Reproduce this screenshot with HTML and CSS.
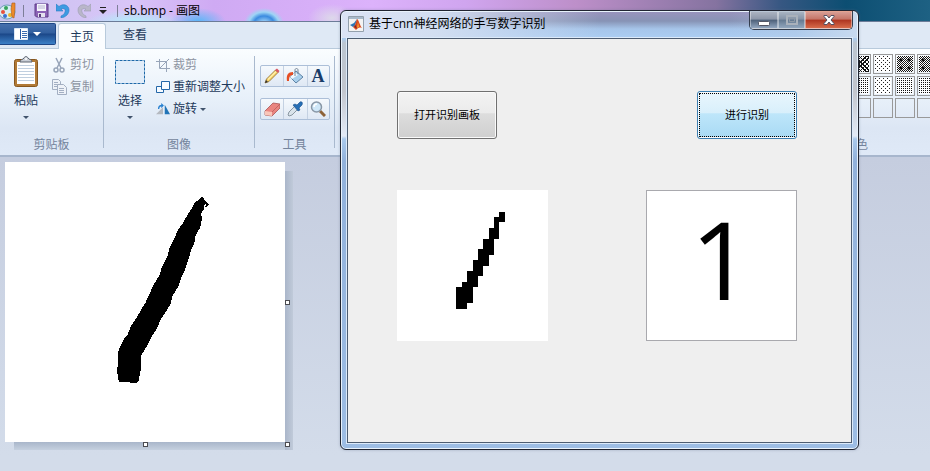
FILE: index.html
```html
<!DOCTYPE html>
<html lang="zh-CN">
<head>
<meta charset="utf-8">
<title>sb.bmp - 画图</title>
<link rel="stylesheet" href="styles.css">
</head>
<body>
<div class="paint">
  <header class="titlebar">
    <svg class="app-icon" width="16" height="18" viewBox="0 0 16 18"><ellipse cx="7" cy="10" rx="8" ry="7" fill="#d8ecf2" stroke="#6d9fb5"/><circle cx="3" cy="10" r="2" fill="#e8503c"/><circle cx="6" cy="6" r="2" fill="#37a35c"/><circle cx="5" cy="14" r="2" fill="#3c6fd0"/><circle cx="10" cy="13" r="2" fill="#f0b526"/><path d="M12 1l3 0 0 6-1 9-2-1-1-8z" fill="#ee8a2a" stroke="#a65a1c" stroke-width=".6"/></svg>
    <span class="bar"></span>
    <button class="quick save" aria-label="保存"><svg width="15" height="15" viewBox="0 0 15 15"><path d="M1 1h13v13H2.500L1 12.500z" fill="#8c63b6" stroke="#5d3c87"/><path d="M3 1h9v7H3z" fill="#f5f5fb"/><path d="M4 3h7M4 5h7" stroke="#b6b4cf"/><path d="M4 10h7v4H4z" fill="#e4e2ef"/><path d="M5 11h2v3H5z" fill="#57407a"/></svg></button>
    <button class="quick undo" aria-label="撤消"><svg width="14" height="15" viewBox="0 0 14 15"><path d="M0 1v7h7L5 6c3-1 5 0 4 3-.500 2-2 3-4 4v2c5-1 8-4 8-8C13 2 7 0 3 3.500z" fill="#3d9be2" stroke="#2b7cc5" stroke-width=".6"/></svg></button>
    <button class="quick redo" aria-label="重做"><svg width="14" height="15" viewBox="0 0 14 15"><path d="M14 1v7H7l2-2C6 5 4 6 5 9c.500 2 2 3 4 4v2c-5-1-8-4-8-8C1 2 7 0 11 3.500z" fill="#b9b6c9" stroke="#9c9db0" stroke-width=".6"/></svg></button>
    <button class="quick more" aria-label="自定义"><svg width="8" height="7" viewBox="0 0 8 7"><path d="M1 0h6v1H1zM0 3h8L4 7z" fill="#222"/></svg></button>
    <span class="bar"></span>
    <span class="doc-name">sb.bmp - 画图</span>
  </header>
  <nav class="tabs">
    <button class="file-tab" aria-label="文件"><svg width="28" height="12" viewBox="0 0 28 12"><path d="M.5.5h13v11H.5z" fill="#fff" stroke="#dce8f7"/><path d="M1 1h5v10H1z" fill="#fff"/><path d="M6.500 1v10" stroke="#2a5ba4"/><path d="M8 3.500h5M8 5.500h5M8 7.500h5M8 9.500h5" stroke="#3a6bb0"/><path d="M19 4h8l-4 4z" fill="#fff"/></svg></button>
    <button class="tab active">主页</button>
    <button class="tab">查看</button>
  </nav>
  <section class="ribbon">
    <div class="group clipboard">
      <div class="group-body">
        <button class="big"><svg width="26" height="32" viewBox="0 0 26 32"><rect x="1.500" y="3.500" width="23" height="27" rx="2" fill="#b17a36" stroke="#87571f"/><path d="M4 6h18v22H4z" fill="#fff"/><path d="M5 9.500h16M5 12.500h16M5 15.500h16M5 18.500h16M5 21.500h16M5 24.500h16" stroke="#c0cfdf"/><path d="M7 6c0-3 3-2 4-4 1-2 3-2 4 0s4 1 4 4z" fill="#c9ced6" stroke="#5d6570"/><circle cx="13" cy="3" r="1" fill="#fff"/></svg><span>粘贴</span><i class="caret"></i></button>
        <div class="stack">
          <button class="small off"><svg width="16" height="16" viewBox="0 0 16 16" fill="none" stroke="#98a5b9" stroke-width="1.500"><path d="M5 1l5 10M11 1L6 11"/><circle cx="5" cy="13" r="2"/><circle cx="11" cy="13" r="2"/></svg>剪切</button>
          <button class="small off"><svg width="16" height="16" viewBox="0 0 16 16" fill="#eef2f8" stroke="#a3afc2"><path d="M1.500.5h6l2 2v8h-8z"/><path d="M3 3.500h4M3 5.500h4M3 7.500h3"/><path d="M6.500 5.500h6l3 3v7h-9z"/><path d="M8 9.500h5M8 11.500h5M8 13.500h5"/></svg>复制</button>
        </div>
      </div>
      <div class="label">剪贴板</div>
    </div>
    <div class="group image">
      <div class="group-body">
        <button class="big"><svg width="32" height="32" viewBox="0 0 32 32"><rect x="1.500" y="4.500" width="29" height="23" fill="#e2edf9" stroke="#1d68a8" stroke-dasharray="3 1"/></svg><span>选择</span><i class="caret"></i></button>
        <div class="stack">
          <button class="small off"><svg width="14" height="14" viewBox="0 0 14 14" fill="none" stroke="#98a5b9"><path d="M3.500 1v9.500H14M0 3.500h10.500V14M4 10L13 1"/></svg>裁剪</button>
          <button class="small"><svg width="14" height="14" viewBox="0 0 14 14" fill="#f7fbff" stroke="#2467a8"><path d="M.5 6.500h7v6h-7z"/><path d="M5.500 1.500h8v8h-8z"/></svg>重新调整大小</button>
          <button class="small"><svg width="16" height="14" viewBox="0 0 16 14"><path d="M8 5v8H0z" fill="#b4b9c0"/><path d="M10 2v11h6z" fill="#2174b7"/><path d="M3 7c0-3 1-4 4-4" fill="none" stroke="#2880d0" stroke-width="1.500"/><path d="M6 0l3 3-3 3z" fill="#2880d0"/></svg>旋转<i class="caret"></i></button>
        </div>
      </div>
      <div class="label">图像</div>
    </div>
    <div class="group tools">
      <div class="group-body">
        <div class="tool-row">
          <button aria-label="铅笔"><svg width="16" height="16" viewBox="0 0 16 16"><path d="M1 15l1.500-4 9-9 2.500 2.500-9 9z" fill="#f4cf63" stroke="#8b6c31" stroke-width=".8"/><path d="M3.500 11l8-8 1 1-8 8z" fill="#fff0ac"/><path d="M11 2l2-1.500 2.500 2.500L14 5z" fill="#d85866"/><path d="M1 15l1-3 2 2z" fill="#333"/></svg></button>
          <button aria-label="填充"><svg width="18" height="16" viewBox="0 0 18 16"><path d="M10 3l7 6-7 6-6-6z" fill="#a9d0ed" stroke="#5e83a5"/><path d="M9 4l3 3-6 4-2-2z" fill="#f0f8fd"/><path d="M9 8V2c0-2 3-2 3 0v4" fill="none" stroke="#758596"/><path d="M7 4C2 4 0 7 1 13h2c0-4 1-6 4-6z" fill="#e54e24"/></svg></button>
          <button class="letter" aria-label="文本">A</button>
        </div>
        <div class="tool-row">
          <button aria-label="橡皮擦"><svg width="16" height="16" viewBox="0 0 16 16"><path d="M1 10l8-8 7 1v4l-8 8-7-1z" fill="#ea8580" stroke="#a95655" stroke-width=".8"/><path d="M1 10l7 1v4l-7-1z" fill="#f9c6b9"/><path d="M8 11l8-8" stroke="#b85f5d" stroke-width=".8"/></svg></button>
          <button aria-label="颜色选取器"><svg width="16" height="16" viewBox="0 0 16 16"><path d="M2 15l-1-1 1-3 6-6 3 3-6 6z" fill="#d9e3eb" stroke="#75838e" stroke-width=".8"/><path d="M6 4l2-1 2 1 3-3c2-1 3 1 2 3l-3 3 1 2-2 1z" fill="#276fb5" stroke="#174d8c" stroke-width=".6"/></svg></button>
          <button aria-label="放大镜"><svg width="16" height="16" viewBox="0 0 16 16"><path d="M10 10l5 5" stroke="#8d6238" stroke-width="3"/><circle cx="6.500" cy="6" r="5" fill="#cfe7f8" stroke="#8997a6" stroke-width="1.500"/><path d="M4 6c0-2 1-3 3-3" fill="none" stroke="#fff" stroke-width="1.500"/></svg></button>
        </div>
      </div>
      <div class="label">工具</div>
    </div>
    <div class="group colors">
      <div class="group-body">
        <div class="palette">
          <i class="swatch dense"></i><i class="swatch sparse"></i><i class="swatch dark"></i><i class="swatch dark"></i>
          <i class="swatch dots"></i><i class="swatch sparse"></i><i class="swatch dots"></i><i class="swatch dots"></i>
          <i class="swatch"></i><i class="swatch"></i><i class="swatch"></i><i class="swatch"></i>
        </div>
      </div>
      <div class="label">色</div>
    </div>
  </section>
  <main class="workspace">
    <div class="sheet">
      <svg class="drawing" viewBox="15 36 840 840" shape-rendering="crispEdges"><path d="M606 140L627 164 613 176 603 190 606 205 601 232 587 256 583 279 572 304 566 326 557 354 542 388 536 407 518 437 512 461 496 488 479 513 474 530 454 561 440 590 423 617 423 657 416 692 409 699 384 697 357 695 354 682 351 660 354 641 355 605 360 591 371 568 381 558 394 526 411 502 424 477 436 459 459 408 479 374 486 350 504 314 509 292 522 268 535 237 548 221 561 197 574 177 583 160z"/><path d="M611 170l7-6M612 175l5-4" stroke="#fff" stroke-width="3"/></svg>
      <i class="handle east"></i><i class="handle south"></i><i class="handle corner"></i>
    </div>
  </main>
</div>
<section class="figure">
  <header class="figure-title">
    <svg width="16" height="16" viewBox="0 0 16 16"><path d="M.5.5h15v15H.5z" fill="#f3f3f3" stroke="#93a0ad"/><path d="M1 1h14v2H1z" fill="#a9bacb"/><path d="M2 9l4-2 3-4-2 7-2 1z" fill="#2b76b5"/><path d="M5 11l2-2 2-6c2 1 3 7 5 9-3-1-4 0-6 2z" fill="#db4b20"/><path d="M9 3l-1 7 1 3c-1-1-2-2-3-2l2-2z" fill="#7d2424"/><path d="M10 6l1 5-2 1z" fill="#f6a32c"/></svg>
    <h1>基于cnn神经网络的手写数字识别</h1>
    <div class="controls">
      <button class="min" aria-label="最小化"><svg width="12" height="5" viewBox="0 0 12 5"><rect x=".5" y=".5" width="11" height="4" rx="1" fill="#fff" stroke="#535766"/></svg></button>
      <button class="max" aria-label="最大化"><svg width="12" height="10" viewBox="0 0 12 10"><path d="M1 1h10v8H1z" fill="none" stroke="#a9b1bb" stroke-width="2"/><path d="M3.500 3.500h5v3h-5z" fill="none" stroke="#8f9aa6"/></svg></button>
      <button class="close" aria-label="关闭"><svg width="12" height="10" viewBox="0 0 12 10"><path d="M1 .5h3l2 2.500L8 .5h3v1L8 5l3 3.500v1H8L6 7 4 9.500H1v-1L4 5 1 1.500z" fill="#fff" stroke="#535062"/></svg></button>
    </div>
  </header>
  <div class="client">
    <div class="row">
      <button class="push">打开识别画板</button>
      <button class="push focused">进行识别</button>
    </div>
    <div class="row">
      <div class="axes"><svg viewBox="0 0 28 28" shape-rendering="crispEdges"><path d="M19 4h1v2h-1zM18 5h1v4h-1zM17 7h1v5h-1zM16 9h1v5h-1zM15 11h1v5h-1zM14 13h1v5h-1zM13 15h1v6h-1zM12 17h1v5h-1zM11 18h1v4h-1z"/></svg></div>
      <div class="axes result">1</div>
    </div>
  </div>
</section>
</body>
</html>
```
FILE: styles.css
```css
* { box-sizing: border-box; }
body {
  margin: 0;
  font: 12px/16px "Open Sans", "Noto Sans CJK SC", sans-serif;
  color: #1e395b;
  overflow: hidden;
}
button {
  font: inherit;
  color: inherit;
  background: none;
  border: 0;
  padding: 0;
}
svg { display: block; flex: none; }
.paint { display: flex; flex-direction: column; height: 100vh; }

.titlebar {
  display: flex;
  align-items: center;
  height: 22px;
  border-bottom: 1px solid #6c7c98;
  background:
    radial-gradient(ellipse 20px 16px at 264px 24px, #8cc4f2 20%, #3b8be0 50%, #9fd4f5 75%, transparent),
    radial-gradient(ellipse 28px 14px at 198px 22px, #55b6f8, transparent),
    radial-gradient(ellipse 50px 12px at 135px 22px, #aef2fa, transparent),
    radial-gradient(ellipse 24px 14px at 332px 18px, #ddd8ea, transparent),
    linear-gradient(90deg, #c9c3ef 0, #d9c5f8 14%, #cfaaf3 23%, #dcb2fb 40%, #d0a5ef 50%, #bd8fc9 62%, #8573a0 77%, #365782 84%, #0c4e72 91%, #1e6183 100%);
}
.bar { width: 1px; height: 12px; background: #7d7e98; }
.app-icon + .bar { margin: 0 10px 0 7px; }
.quick + .bar { margin: 0 6px 0 10px; }
.undo { margin-left: 7px; }
.redo { margin-left: 7px; }
.more { margin-left: 8px; }
.doc-name { color: #000; }

.tabs {
  display: flex;
  align-items: flex-end;
  height: 27px;
  background: #dfe9f5;
  border-bottom: 1px solid #b8cadb;
}
.file-tab {
  display: grid;
  place-items: center;
  width: 56px;
  height: 22px;
  margin: 0 2px 3px 0;
  border: 1px solid #1d4787;
  border-left: 0;
  border-radius: 0 2px 2px 0;
  background: linear-gradient(#466fac, #315f9f 45%, #1b4788 50%, #3b80c7);
}
.tab { height: 26px; padding: 0 12px; }
.active {
  margin: 0 5px -1px 0;
  padding: 0 11px;
  border: 1px solid #b8cadb;
  border-bottom: 0;
  border-radius: 3px 3px 0 0;
  background: #fbfdff;
}

.ribbon {
  display: flex;
  height: 108px;
  padding-top: 7px;
  border-bottom: 2px solid #a7b6cd;
  background: linear-gradient(#fafdff, #e6eff9 50%, #dce6f4 75%, #dfe9f7);
}
.group {
  display: flex;
  flex-direction: column;
  height: 92px;
  border-right: 1px solid #a9b9ce;
}
.group-body { display: flex; flex: none; height: 80px; }
.label { flex: none; line-height: 18px; text-align: center; color: #74849c; }
.clipboard { width: 104px; }
.image { width: 151px; }
.tools { width: 80px; }
.big { display: flex; flex-direction: column; align-items: center; width: 52px; height: 68px; }
.big span { margin: 5px 0 7px; }
.caret { border: 3px solid transparent; border-top-color: #40536c; border-bottom: 0; }
.stack { display: flex; flex-direction: column; margin-top: -2px; }
.small { display: flex; align-items: center; gap: 3px; height: 22px; white-space: nowrap; }
.small svg { width: 16px; }
.image .small svg { width: 14px; }
.off { color: #8d94a1; }
.tools .group-body { flex-direction: column; align-items: center; gap: 11px; padding-top: 9px; }
.clipboard .stack { margin-left: -1px; }
.tool-row {
  display: grid;
  grid-template-columns: 22px 24px 22px;
  width: 70px;
  height: 22px;
  border: 1px solid #acbfd8;
  border-radius: 2px;
  background: linear-gradient(#f5f9fd, #dfe8f4);
}
.tool-row button { display: grid; place-items: center; }
.tool-row button + button { border-left: 1px solid #c4d1e2; }
.letter { font: bold 18px/20px "Liberation Serif", serif; color: #193c69; }
.colors { width: 79px; height: 100px; margin-left: auto; border: 0; overflow: hidden; }
.colors .label { text-align: left; padding-left: 5px; }
.colors { margin-top: -2px; }
.colors .group-body { height: 82px; }
.palette { display: grid; grid-template-columns: repeat(4, 20px); gap: 2px; align-content: start; }
.swatch { height: 20px; border: 1px solid #999; padding: 1px; }
.dense {
  background:
    repeating-linear-gradient(45deg, #111 0 1px, transparent 1px 3px) content-box,
    repeating-linear-gradient(135deg, #111 0 1px, #fff 1px 3px) content-box;
}
.dark {
  background:
    radial-gradient(circle, #111 1px, transparent 2px) 0 0 / 8px 8px content-box,
    conic-gradient(#111 25%, #fff 0 50%, #111 0 75%, #fff 0) 0 0 / 2px 2px content-box;
}
.sparse {
  background:
    conic-gradient(from 270deg at 1px 1px, #222 25%, transparent 0) 0 0 / 4px 4px content-box,
    conic-gradient(from 270deg at 1px 1px, #222 25%, #fff 0) 2px 2px / 4px 4px content-box;
}
.dots { background: conic-gradient(from 270deg at 1px 1px, #111 25%, #fff 0) 0 0 / 2px 2px content-box; }

.workspace { flex: 1; padding: 5px; background: linear-gradient(#c5cddf, #d3dcea 95%); }
.sheet { position: relative; width: 280px; height: 280px; background: #fff; }
.sheet::before {
  content: "";
  position: absolute;
  left: 100%;
  top: 9px;
  width: 8px;
  bottom: -8px;
  background: linear-gradient(90deg, #aab6ca, #c0cad9);
}
.sheet::after {
  content: "";
  position: absolute;
  left: 9px;
  top: 100%;
  right: 0;
  height: 8px;
  background: linear-gradient(#a9b6ca, #c5d0df);
}
.handle { position: absolute; z-index: 1; width: 5px; height: 5px; border: 1px solid #4b4b50; background: #fff; }
.east { left: 100%; top: 138px; }
.south { left: 138px; top: 100%; }
.corner { left: 100%; top: 100%; }

.figure {
  position: absolute;
  inset: 10px 71px 21px 340px;
  display: flex;
  flex-direction: column;
  padding: 0 6px 6px;
  border: 1px solid #202431;
  border-radius: 6px;
  box-shadow: inset 0 0 0 1px #e8f2fc, 0 0 3px #60708a66;
  background:
    linear-gradient(90deg, #dbe3f5 0, #d2def1 18%, transparent 50%) 0 0 / 100% 27px no-repeat,
    linear-gradient(90deg, transparent 75%, #b9cee866 88%, #c8daf0) 0 0 / 100% 27px no-repeat,
    linear-gradient(#9a93bd, #8793b5 10px, #a6c5ea 18px, #abcdf2 27px, #bcc6d1 32px, #c2c6ce 80px, #e3eaf6 125px, #a9c9ec 128px, #91b1db 150px, #9dbde4);
}
.figure-title { display: flex; height: 27px; padding: 5px 0 0 1px; color: #000; }
.figure-title h1 { margin: 0 0 0 5px; font: inherit; white-space: nowrap; }
.controls {
  display: flex;
  width: 104px;
  height: 19px;
  margin: -5px -1px 0 auto;
  border: 1px solid #333d4d;
  border-top: 0;
  border-radius: 0 0 5px 5px;
  overflow: hidden;
}
.controls button { display: grid; place-items: center; border: 1px solid #ffffff66; }
.min { width: 28px; background: linear-gradient(#aab2c0, #8c96a8 45%, #4d6079 50%, #91a6bf); }
.controls .min { padding-top: 6px; }
.max { width: 27px; background: linear-gradient(#a9b4c2, #8493a7 45%, #647990 50%, #91a6bd); }
.close { flex: 1; background: linear-gradient(#d89d94, #c57567 45%, #ad3420 50%, #d76b4a); }
.client {
  display: flex;
  flex-direction: column;
  flex: 1;
  gap: 51px;
  padding: 52px 54px 0 49px;
  border: 1px solid #4d5c70;
  box-shadow: 0 0 0 1px #dceafa;
  background: #efefef;
}
.row { display: flex; justify-content: space-between; }
.push {
  width: 100px;
  height: 48px;
  border: 1px solid #707070;
  border-radius: 3px;
  box-shadow: inset 0 0 0 1px #fafafa;
  background: linear-gradient(#f3f3f3, #ebebeb 46%, #dddddd 47%, #cfcfcf);
  color: #000;
  font-size: 11px;
}
.focused {
  border-color: #3c7fb1;
  outline: 1px dotted #000;
  outline-offset: -3px;
  background: linear-gradient(#e9f6fd, #d8effb 46%, #bee6fa 47%, #a8daf4);
}
.axes { width: 151px; height: 151px; background: #fff; }
.result {
  border: 1px solid #a9a9ae;
  color: #000;
  font: 500 108px/136px "Open Sans", sans-serif;
  text-align: center;
}
```
